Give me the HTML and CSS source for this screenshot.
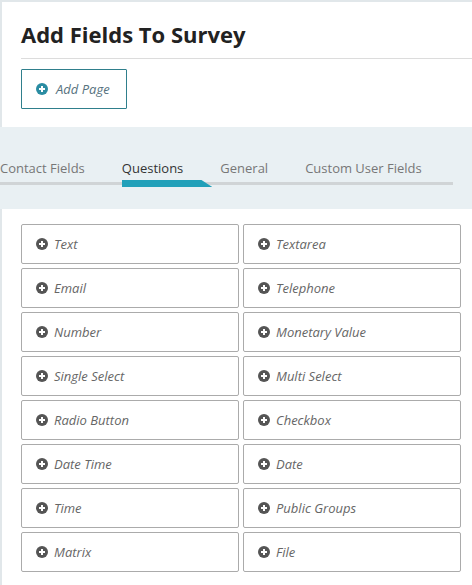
FILE: index.html
```html
<!DOCTYPE html>
<html lang="en">
<head>
    <meta charset="UTF-8">
    <meta name="viewport" content="width=device-width, initial-scale=1.0">
    <title>Add Fields To Survey</title>
    <link rel="stylesheet" href="styles.css">
</head>
<body>
<div id="page">
    <div id="header">
        <div class="title-row">
            <h1>Add Fields To Survey</h1>
        </div>
        <button class="add-page">
            <svg class="ico" viewBox="0 0 12 12"><circle cx="6" cy="6" r="6"/><path d="M6 3v6M3 6h6"/></svg>
            Add Page
        </button>
    </div>

    <div id="tabs">
        <ul class="tab-list">
            <li class="tab">Contact Fields</li>
            <li class="tab active">Questions</li>
            <li class="tab">General</li>
            <li class="tab">Custom User Fields</li>
        </ul>
    </div>

    <div id="fields">
        <div class="field-grid">
            <div class="field"><svg class="ico" viewBox="0 0 12 12"><circle cx="6" cy="6" r="6"/><path d="M6 3v6M3 6h6"/></svg>Text</div>
            <div class="field"><svg class="ico" viewBox="0 0 12 12"><circle cx="6" cy="6" r="6"/><path d="M6 3v6M3 6h6"/></svg>Textarea</div>
            <div class="field"><svg class="ico" viewBox="0 0 12 12"><circle cx="6" cy="6" r="6"/><path d="M6 3v6M3 6h6"/></svg>Email</div>
            <div class="field"><svg class="ico" viewBox="0 0 12 12"><circle cx="6" cy="6" r="6"/><path d="M6 3v6M3 6h6"/></svg>Telephone</div>
            <div class="field"><svg class="ico" viewBox="0 0 12 12"><circle cx="6" cy="6" r="6"/><path d="M6 3v6M3 6h6"/></svg>Number</div>
            <div class="field"><svg class="ico" viewBox="0 0 12 12"><circle cx="6" cy="6" r="6"/><path d="M6 3v6M3 6h6"/></svg>Monetary Value</div>
            <div class="field"><svg class="ico" viewBox="0 0 12 12"><circle cx="6" cy="6" r="6"/><path d="M6 3v6M3 6h6"/></svg>Single Select</div>
            <div class="field"><svg class="ico" viewBox="0 0 12 12"><circle cx="6" cy="6" r="6"/><path d="M6 3v6M3 6h6"/></svg>Multi Select</div>
            <div class="field"><svg class="ico" viewBox="0 0 12 12"><circle cx="6" cy="6" r="6"/><path d="M6 3v6M3 6h6"/></svg>Radio Button</div>
            <div class="field"><svg class="ico" viewBox="0 0 12 12"><circle cx="6" cy="6" r="6"/><path d="M6 3v6M3 6h6"/></svg>Checkbox</div>
            <div class="field"><svg class="ico" viewBox="0 0 12 12"><circle cx="6" cy="6" r="6"/><path d="M6 3v6M3 6h6"/></svg>Date Time</div>
            <div class="field"><svg class="ico" viewBox="0 0 12 12"><circle cx="6" cy="6" r="6"/><path d="M6 3v6M3 6h6"/></svg>Date</div>
            <div class="field"><svg class="ico" viewBox="0 0 12 12"><circle cx="6" cy="6" r="6"/><path d="M6 3v6M3 6h6"/></svg>Time</div>
            <div class="field"><svg class="ico" viewBox="0 0 12 12"><circle cx="6" cy="6" r="6"/><path d="M6 3v6M3 6h6"/></svg>Public Groups</div>
            <div class="field"><svg class="ico" viewBox="0 0 12 12"><circle cx="6" cy="6" r="6"/><path d="M6 3v6M3 6h6"/></svg>Matrix</div>
            <div class="field"><svg class="ico" viewBox="0 0 12 12"><circle cx="6" cy="6" r="6"/><path d="M6 3v6M3 6h6"/></svg>File</div>
        </div>
    </div>
</div>
</body>
</html>
```

FILE: styles.css
```css
:root {
    --bg-color: #e9f0f3;
    --panel-border: #e1e7ea;
    --teal: #2a8ca2;
    --teal-bar: #21a0b9;
    --field-border: #ababab;
    --field-text: #666;
}

body {
    background-color: var(--bg-color);
    font-family: 'Open Sans', sans-serif;
    margin: 0;
}

#page {
    display: flex;
    flex-direction: column;
    height: 585px;
}

#header {
    background-color: white;
    border-top: 2px solid var(--panel-border);
    border-left: 2px solid var(--panel-border);
    padding: 0 0 18px 19px;
}

.title-row {
    border-bottom: 1px solid #dcdcdc;
    padding: 17px 0 9px 0;
}

h1 {
    margin: 0;
    font-size: 22px;
    line-height: 30px;
    font-weight: 700;
    color: #222;
}

.add-page {
    display: flex;
    align-items: center;
    gap: 8px;
    margin-top: 10px;
    width: 106px;
    height: 40px;
    padding: 0 0 0 14px;
    background: white;
    border: 1px solid #2f7f8c;
    border-radius: 1px;
    color: #56727e;
    font-family: 'Open Sans', sans-serif;
    font-size: 13px;
    font-style: italic;
    cursor: pointer;
}

.add-page .ico circle {
    fill: var(--teal);
}

.ico {
    width: 12px;
    height: 12px;
    flex-shrink: 0;
}

.ico circle {
    fill: #555;
}

.ico path {
    stroke: white;
    stroke-width: 2;
}

#tabs {
    height: 82px;
    padding-top: 32px;
    box-sizing: border-box;
}

.tab-list {
    display: flex;
    list-style: none;
    margin: 0;
    padding: 0;
    width: 453px;
    border-bottom: 3px solid #d0d4d6;
}

.tab {
    position: relative;
    flex-shrink: 0;
    white-space: nowrap;
    padding: 0 37px 5px 0;
    font-size: 13px;
    line-height: 18px;
    color: #777;
}

.tab.active {
    color: #333;
}

.tab.active::after {
    content: '';
    position: absolute;
    left: 0;
    right: 8px;
    bottom: -5px;
    height: 7px;
    background-color: var(--teal-bar);
    clip-path: polygon(0 0, 88% 0, 100% 100%, 0 100%);
}

#fields {
    flex-grow: 1;
    background-color: white;
    border-left: 2px solid var(--panel-border);
    padding: 15px 0 0 19px;
}

.field-grid {
    display: grid;
    grid-template-columns: 218px 218px;
    column-gap: 4px;
    row-gap: 4px;
}

.field {
    display: flex;
    align-items: center;
    gap: 6px;
    height: 40px;
    box-sizing: border-box;
    padding-left: 14px;
    border: 1px solid var(--field-border);
    border-radius: 2px;
    color: var(--field-text);
    font-size: 13px;
    font-style: italic;
}
```
